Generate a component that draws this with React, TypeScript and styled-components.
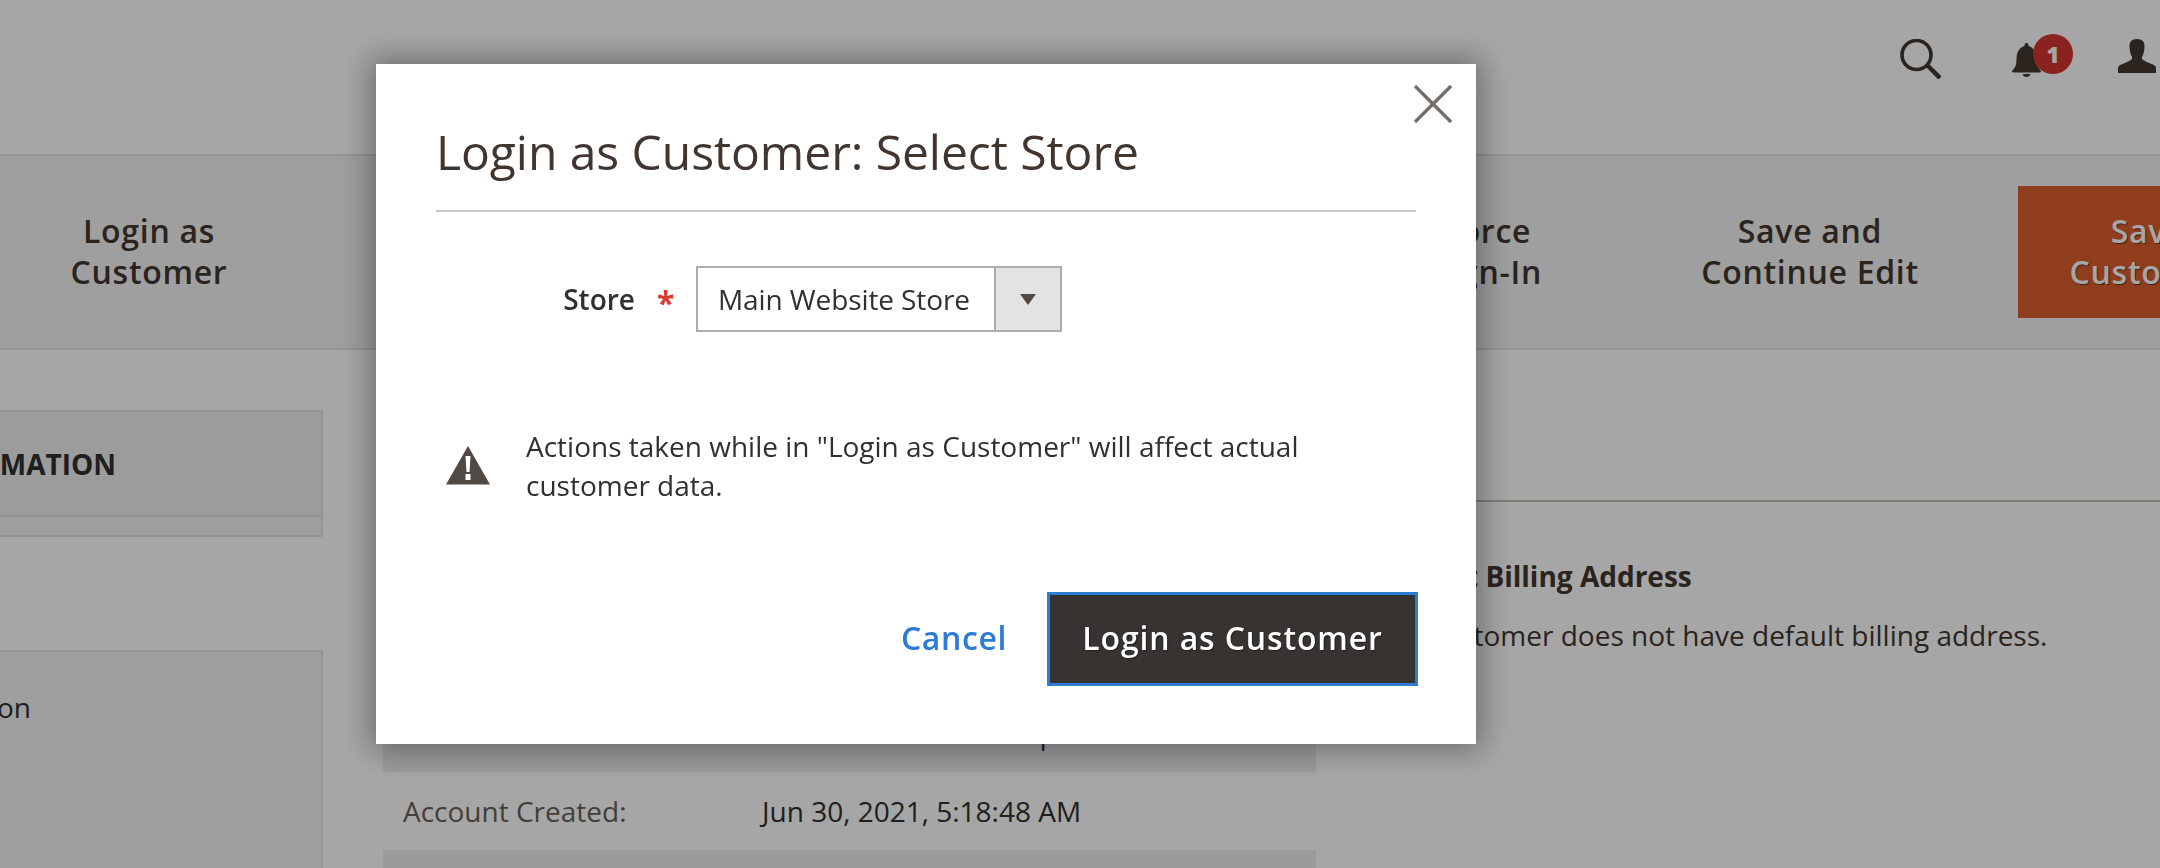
import React from "react";
import styled, { createGlobalStyle } from "styled-components";

const Global = createGlobalStyle`
  html, body {
    margin: 0;
    height: 100%;
    overflow: hidden;
    background: #fff;
  }
  * { box-sizing: border-box; }
  body {
    font-family: "Open Sans", "Noto Sans", sans-serif;
    font-size: 28px;
    color: #303030;
  }
`;

// the admin page behind the dialog is scrolled sideways, so it starts off screen
const Page = styled.div`
  width: 2700px;
  height: 868px;
  margin-left: -300px;
  overflow: hidden;
`;

const Header = styled.header`
  height: 156px;
  border-bottom: 2px solid #e3e3e3;
  padding: 39px 244px 0 0;
  display: flex;
  justify-content: flex-end;
  align-items: flex-start;
`;

const BellWrap = styled.div`
  position: relative;
  width: 38px;
  height: 40px;
  margin: 0 68px 0 71px;
`;

const Badge = styled.span`
  position: absolute;
  left: 21px;
  top: -5px;
  width: 40px;
  height: 40px;
  border-radius: 50%;
  background: #d43631;
  color: #fff;
  font-size: 22px;
  font-weight: 800;
  line-height: 40px;
  text-align: center;
`;

const Toolbar = styled.div`
  height: 194px;
  background: #f4f4f4;
  border-bottom: 2px solid #e3e3e3;
  padding-left: 319px;
  display: flex;
  align-items: center;
`;

const ToolButton = styled.div<{ $width: number; $before?: number; $primary?: boolean }>`
  flex: none;
  width: ${(p) => p.$width}px;
  height: 132px;
  margin-left: ${(p) => p.$before || 0}px;
  padding-bottom: 2px;
  display: flex;
  align-items: center;
  justify-content: center;
  text-align: center;
  font-size: 32px;
  font-weight: 600;
  line-height: 41px;
  letter-spacing: 0.7px;
  color: #41362f;
  background: ${(p) => (p.$primary ? "#dc5f2b" : "transparent")};
  text-shadow: ${(p) => (p.$primary ? "1px 1px 1px rgba(0,0,0,.5)" : "none")};
  ${(p) => p.$primary && "color: #fff;"}
`;

const Columns = styled.div`
  display: flex;
  align-items: flex-start;
`;

const Sidebar = styled.aside`
  flex: none;
  width: 623px;
  padding-top: 60px;
`;

const SidePanel = styled.div`
  background: #f4f4f4;
  border: 2px solid #e3e3e3;
  border-radius: 2px;
`;

const PanelTitle = styled.div`
  height: 105px;
  border-bottom: 2px solid #e3e3e3;
  background: #f0f0f0;
  padding-right: 205px;
  text-align: right;
  font-weight: 700;
  line-height: 105px;
  color: #303030;
`;

const PanelStrip = styled.div`
  height: 18px;
`;

const SideGap = styled.div`
  height: 113px;
`;

const TabList = styled.div`
  height: 400px;
  padding: 35px 290px 0 0;
  text-align: right;
  line-height: 40px;
`;

const Main = styled.main`
  flex: none;
  width: 933px;
  margin-left: 60px;
  padding-top: 344px;
`;

const InfoRow = styled.div<{ $dark?: boolean }>`
  height: 78px;
  padding-left: 20px;
  display: flex;
  align-items: center;
  background: ${(p) => (p.$dark ? "#eeeeee" : "#fff")};
`;

const InfoLabel = styled.span`
  flex: none;
  width: 359px;
  color: #676056;
`;

const InfoValue = styled.span`
  color: #303030;
`;

const AddressColumn = styled.section`
  flex: none;
  width: 1000px;
  margin-left: 58px;
  padding-top: 150px;
`;

const AddressBox = styled.div`
  border-top: 2px solid #c5c0b4;
  padding-top: 54px;
`;

const AddressTitle = styled.div`
  font-weight: 700;
  line-height: 40px;
  color: #41362f;
  margin-bottom: 19px;
`;

const AddressText = styled.div`
  line-height: 40px;
  color: #41362f;
`;

const Overlay = styled.div`
  position: fixed;
  inset: 0;
  background: rgba(0, 0, 0, 0.35);
`;

const Modal = styled.div`
  position: relative;
  width: 1100px;
  height: 680px;
  margin: 64px 0 0 376px;
  padding: 0 60px;
  background: #fff;
  box-shadow: 0 0 30px 6px rgba(0, 0, 0, 0.35);
`;

const CloseButton = styled.button`
  position: absolute;
  top: 21px;
  right: 24px;
  width: 38px;
  height: 38px;
  padding: 0;
  border: none;
  background: none;
  display: block;
`;

const Title = styled.h1`
  margin: 0;
  height: 148px;
  padding-top: 58px;
  border-bottom: 2px solid #c8c8c8;
  font-size: 48px;
  font-weight: 400;
  line-height: 60px;
  letter-spacing: -0.05px;
  color: #41362f;
`;

const FormRow = styled.div`
  display: flex;
  align-items: center;
  margin-top: 54px;
`;

const FieldLabel = styled.label`
  flex: none;
  width: 199px;
  text-align: right;
  font-weight: 600;
  color: #303030;
`;

const Required = styled.span`
  flex: none;
  width: 61px;
  padding: 7px 0 0 22px;
  color: #dc3a2e;
  font-size: 32px;
  font-weight: 700;
  line-height: 1;
`;

const SelectBox = styled.div`
  width: 366px;
  height: 66px;
  border: 2px solid #adadad;
  display: flex;
  align-items: stretch;
`;

const SelectValue = styled.div`
  flex: 1;
  padding-left: 20px;
  line-height: 62px;
  letter-spacing: -0.1px;
  color: #303030;
`;

const SelectArrow = styled.div`
  flex: none;
  width: 66px;
  border-left: 2px solid #adadad;
  background: #e3e3e3;
  display: flex;
  align-items: center;
  justify-content: center;
  &::after {
    content: "";
    border-style: solid;
    border-width: 11px 8px 0;
    border-color: #514943 transparent transparent;
  }
`;

const Notice = styled.div`
  display: flex;
  align-items: center;
  margin-top: 95px;
  padding-left: 10px;
`;

const NoticeText = styled.p`
  margin: 0 0 0 36px;
  width: 800px;
  line-height: 38.5px;
  color: #303030;
`;

const Actions = styled.div`
  display: flex;
  justify-content: flex-end;
  align-items: center;
  margin: 88px -2px 0 0;
`;

const CancelLink = styled.a`
  font-size: 32px;
  font-weight: 600;
  color: #2c7bd6;
  letter-spacing: 0.6px;
  margin: 0 40px 4px 0;
`;

const PrimaryButton = styled.button`
  width: 371px;
  height: 94px;
  padding: 0 0 4px;
  border: 3px solid #2b7dd5;
  background: #373330;
  color: #fff;
  font-family: inherit;
  font-size: 32px;
  font-weight: 600;
  letter-spacing: 0.85px;
  text-shadow: 1px 1px 1px rgba(0, 0, 0, 0.4);
`;

const Icon = styled.svg`
  display: block;
  flex: none;
`;

function App() {
  return (
    <>
      <Global />
      <Page>
        <Header>
          <Icon width="41" height="40" viewBox="0 0 41 40">
            <circle cx="16.500" cy="16" r="14.500" fill="none" stroke="#41362f" strokeWidth="3.600" />
            <path d="M27 26L40 39" fill="none" stroke="#41362f" strokeWidth="4.500" />
          </Icon>
          <BellWrap>
            <Icon width="38" height="40" viewBox="0 0 38 40">
              <path
                d="M12.500 7C12.500 5 13 4 14.500 4C16 4 16.500 5 16.500 7C23 9 24.500 15 24.500 21C24.500 26 26 29 29 32C29 33 28 33.500 27 33.500L2 33.500C1 33.500 0 33 0 32C3 29 4.500 26 4.500 21C4.500 15 6 9 12.500 7Z"
                fill="#41362f"
              />
              <path d="M10.500 35H18.500C18 37 16.500 38 14.500 38C12.500 38 11 37 10.500 35Z" fill="#41362f" />
            </Icon>
            <Badge>1</Badge>
          </BellWrap>
          <Icon width="38" height="34" viewBox="0 0 38 34">
            <path
              d="M19 0C24.500 0 26.500 3 26.500 7C26.500 12 25.500 15 24 18L24 20C25.500 22 29.500 23 33.500 25C36.500 26 38 27 38 29L38 34L0 34L0 29C0 27 1.500 26 4.500 25C8.500 23 12.500 22 14 20L14 18C12.500 15 11.500 12 11.500 7C11.500 3 13.500 0 19 0Z"
              fill="#41362f"
            />
          </Icon>
        </Header>
        <Toolbar>
          <ToolButton $width={260}>
            Login as
            <br />
            Customer
          </ToolButton>
          <ToolButton $width={200} $before={1108}>
            Force
            <br />
            Sign-In
          </ToolButton>
          <ToolButton $width={340} $before={53}>
            Save and
            <br />
            Continue Edit
          </ToolButton>
          <ToolButton $width={260} $before={38} $primary>
            Save
            <br />
            Customer
          </ToolButton>
        </Toolbar>
        <Columns>
          <Sidebar>
            <SidePanel>
              <PanelTitle>CUSTOMER INFORMATION</PanelTitle>
              <PanelStrip />
            </SidePanel>
            <SideGap />
            <SidePanel>
              <TabList>Account Information</TabList>
            </SidePanel>
          </Sidebar>
          <Main>
            <InfoRow $dark>
              <InfoLabel>Confirmed email:</InfoLabel>
              <InfoValue>Confirmation Not Required</InfoValue>
            </InfoRow>
            <InfoRow>
              <InfoLabel>Account Created:</InfoLabel>
              <InfoValue>Jun 30, 2021, 5:18:48 AM</InfoValue>
            </InfoRow>
            <InfoRow $dark />
          </Main>
          <AddressColumn>
            <AddressBox>
              <AddressTitle>Default Billing Address</AddressTitle>
              <AddressText>The customer does not have default billing address.</AddressText>
            </AddressBox>
          </AddressColumn>
        </Columns>
      </Page>
      <Overlay>
        <Modal>
          <CloseButton aria-label="Close">
            <Icon width="38" height="38" viewBox="0 0 38 38">
              <path d="M1 1L37 37M37 1L1 37" stroke="#736e69" strokeWidth="3.400" fill="none" />
            </Icon>
          </CloseButton>
          <Title>Login as Customer: Select Store</Title>
          <FormRow>
            <FieldLabel>Store</FieldLabel>
            <Required>*</Required>
            <SelectBox>
              <SelectValue>Main Website Store</SelectValue>
              <SelectArrow />
            </SelectBox>
          </FormRow>
          <Notice>
            <Icon width="44" height="39" viewBox="0 0 44 39">
              <path
                fillRule="evenodd"
                d="M22 0L44 38.500L0 38.500ZM19.500 10L20.500 26L23.500 26L24.500 10ZM19.500 28L19.500 34L24.500 34L24.500 28Z"
                fill="#514943"
              />
            </Icon>
            <NoticeText>Actions taken while in "Login as Customer" will affect actual customer data.</NoticeText>
          </Notice>
          <Actions>
            <CancelLink>Cancel</CancelLink>
            <PrimaryButton>Login as Customer</PrimaryButton>
          </Actions>
        </Modal>
      </Overlay>
    </>
  );
}

export default App;
